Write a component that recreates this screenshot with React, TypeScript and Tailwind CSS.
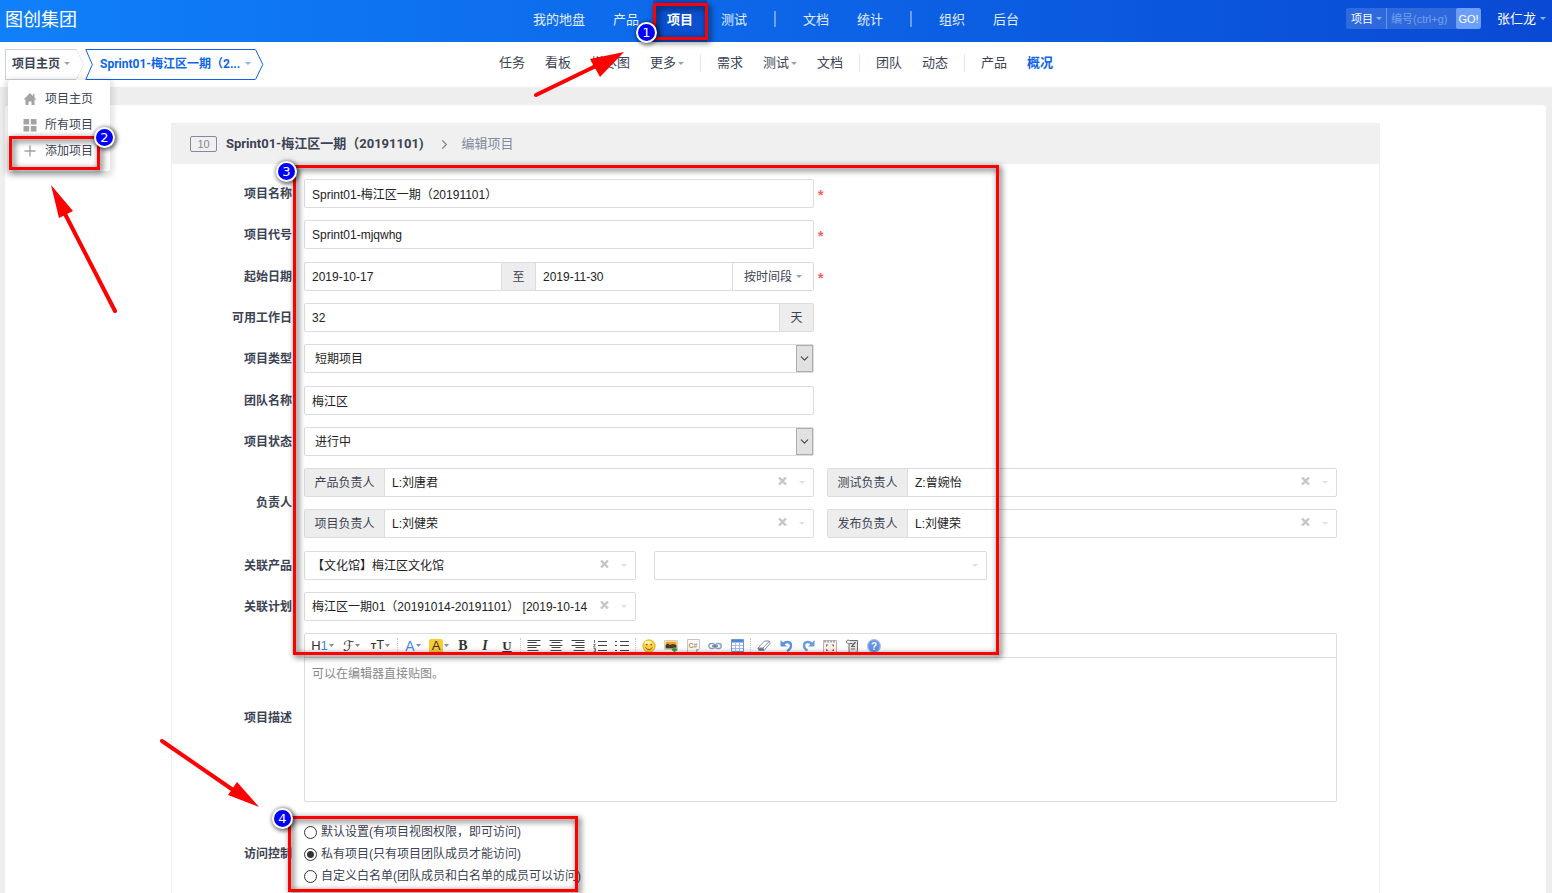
import type { ReactNode } from "react";
import { ChevronDown, ChevronRight } from "lucide-react";

const ownerRows = [
  [
    { id: "po", label: "产品负责人", value: "L:刘唐君" },
    { id: "qd", label: "测试负责人", value: "Z:曾婉怡" },
  ],
  [
    { id: "pm", label: "项目负责人", value: "L:刘健荣" },
    { id: "rd", label: "发布负责人", value: "L:刘健荣" },
  ],
];

const accessOptions = [
  { id: "open", label: "默认设置(有项目视图权限，即可访问)" },
  { id: "private", label: "私有项目(只有项目团队成员才能访问)" },
  { id: "custom", label: "自定义白名单(团队成员和白名单的成员可以访问)" },
];

const inputClass =
  "h-[29px] w-full min-w-0 rounded-[2px] border border-[#dcdcdc] bg-white px-[7px] text-[#222] outline-none";

function Caret({ className = "text-[#a0a0a0]" }: { className?: string }) {
  return (
    <svg width="6" height="3" viewBox="0 0 6 3" className={`shrink-0 ${className}`} aria-hidden="true">
      <path d="M0 0h6L3 3z" fill="currentColor" />
    </svg>
  );
}

/* ---------- top bar ---------- */

function TopLink({ children, active = false }: { children: ReactNode; active?: boolean }) {
  return (
    <a
      href="#"
      className={`flex h-full items-center px-[14px] pb-[3px] ${active ? "bg-[#0a50cf] font-bold text-white" : "text-[#e3eefe]"}`}
    >
      {children}
    </a>
  );
}

function TopSeparator() {
  return <span className="mx-[13px] mb-1 h-4 w-[2px] bg-white/40" />;
}

function TopBar() {
  return (
    <header className="grid h-[42px] grid-cols-[1fr_auto_1fr] items-center bg-linear-to-r from-[#1080fa] via-[#0d65e8] to-[#0a49d3] text-[13px] text-white">
      <h1 className="pb-[3px] pl-[5px] text-[18px] leading-6">图创集团</h1>
      <nav className="flex h-full items-center whitespace-nowrap">
        <TopLink>我的地盘</TopLink>
        <TopLink>产品</TopLink>
        <TopLink active>项目</TopLink>
        <TopLink>测试</TopLink>
        <TopSeparator />
        <TopLink>文档</TopLink>
        <TopLink>统计</TopLink>
        <TopSeparator />
        <TopLink>组织</TopLink>
        <TopLink>后台</TopLink>
      </nav>
      <div className="flex items-center justify-end gap-4 pr-[6px] pb-[5px]">
        <form className="flex h-[21px] overflow-hidden rounded-[2px] bg-white/15 text-[11px]">
          <button type="button" className="flex w-[41px] items-center justify-between border-r border-white/30 pr-1 pl-[5px]">
            项目
            <Caret className="text-[#8db4f5]" />
          </button>
          <input
            aria-label="编号"
            placeholder="编号(ctrl+g)"
            className="w-[69px] bg-transparent pl-1 outline-none placeholder:text-[#75a0ee]"
          />
          <button type="submit" className="w-[25px] rounded-[2px] bg-[#6c9ffa]">
            GO!
          </button>
        </form>
        <button type="button" className="flex items-center gap-1">
          张仁龙
          <Caret className="text-[#8db4f5]" />
        </button>
      </div>
    </header>
  );
}

/* ---------- second bar ---------- */

function SubLink({ children, caret = false, active = false }: { children: ReactNode; caret?: boolean; active?: boolean }) {
  return (
    <a href="#" className={`flex items-center gap-[2px] px-[10px] ${active ? "font-bold text-[#0c64eb]" : ""}`}>
      {children}
      {caret && <Caret />}
    </a>
  );
}

function SubSeparator() {
  return <span className="mx-[6px] h-[18px] w-px bg-[#e8e8e8]" />;
}

function ProjectMenu() {
  return (
    <ul className="absolute top-[31px] left-[3px] z-10 h-[91px] w-[102px] rounded-[3px] bg-white pt-[6px] shadow-[0_2px_5px_4px_rgba(0,0,0,0.1)]">
      <li>
        <a href="#" className="flex h-[26px] items-center gap-2 pl-[15px]">
          <svg width="14" height="14" viewBox="0 0 14 14" fill="#a3a3a3">
            <path d="M7 1 0.5 7.5H2.5V13H5.5V9.5H8.5V13H11.5V7.5H13.5L11.5 5.5V2H10V4z" />
          </svg>
          项目主页
        </a>
      </li>
      <li>
        <a href="#" className="flex h-[26px] items-center gap-2 pl-[15px]">
          <svg width="14" height="14" viewBox="0 0 14 14" fill="#a3a3a3">
            <path d="M0.5 1h5.7v5.5H0.5zM7.8 1h5.7v5.5H7.8zM0.5 8h5.7v5.5H0.5zM7.8 8h5.7v5.5H7.8z" />
          </svg>
          所有项目
        </a>
      </li>
      <li>
        <a href="#" className="flex h-[26px] items-center gap-2 pl-[15px]">
          <svg width="14" height="14" viewBox="0 0 14 14" stroke="#a3a3a3" strokeWidth="1.4">
            <path d="M7 1.5v11M1.5 7h11" />
          </svg>
          添加项目
        </a>
      </li>
    </ul>
  );
}

function SubBar() {
  return (
    <div className="grid h-[45px] grid-cols-[1fr_auto_1fr] items-center bg-white">
      <div className="flex items-center pl-[5px]">
        <div className="relative">
          <button
            type="button"
            className="flex h-[31px] w-[71px] items-center gap-1 border border-r-0 border-[#cbd0db] pb-[2px] pl-[6px] font-bold"
          >
            项目主页
            <Caret />
          </button>
          <ProjectMenu />
        </div>
        <svg width="9" height="31" viewBox="0 0 9 31" fill="none" stroke="#dcdfe6" strokeDasharray="2 1">
          <path d="M0.5 0.5 7.5 15.5 0.5 30.5" />
        </svg>
        <svg width="8" height="31" viewBox="0 0 8 31" fill="none" stroke="#0c64eb">
          <path d="M8 0.5H0.8L7.3 15.5 0.8 30.5H8" />
        </svg>
        <button
          type="button"
          className="flex h-[31px] w-[162px] items-center justify-between border-y border-[#0c64eb] pr-1 pb-[2px] pl-[7px] font-bold text-[#0c64eb]"
        >
          <span className="font-[Roboto,Noto_Sans_CJK_SC,sans-serif]">Sprint01-梅江区一期（2...</span>
          <Caret className="text-[#86b1f5]" />
        </button>
        <svg width="9" height="31" viewBox="0 0 9 31" fill="none" stroke="#0c64eb">
          <path d="M0.5 0.5 7.8 15.5 0.5 30.5" />
        </svg>
      </div>
      <nav className="flex items-center pb-[3px] text-[13px] whitespace-nowrap">
        <SubLink>任务</SubLink>
        <SubLink>看板</SubLink>
        <SubLink>燃尽图</SubLink>
        <SubLink caret>更多</SubLink>
        <SubSeparator />
        <SubLink>需求</SubLink>
        <SubLink caret>测试</SubLink>
        <SubLink>文档</SubLink>
        <SubSeparator />
        <SubLink>团队</SubLink>
        <SubLink>动态</SubLink>
        <SubSeparator />
        <SubLink>产品</SubLink>
        <SubLink active>概况</SubLink>
      </nav>
    </div>
  );
}

/* ---------- form parts ---------- */

function Row({ label, htmlFor, children }: { label: string; htmlFor?: string; children: ReactNode }) {
  return (
    <div className="flex items-center gap-3">
      <label htmlFor={htmlFor} className="w-[120px] shrink-0 text-right font-bold">
        {label}
      </label>
      <div className="min-w-0 flex-1">{children}</div>
    </div>
  );
}

// first column of the two-column form, with room for the required mark
function HalfRow({
  label,
  htmlFor,
  required = false,
  children,
}: {
  label: string;
  htmlFor: string;
  required?: boolean;
  children: ReactNode;
}) {
  return (
    <Row label={label} htmlFor={htmlFor}>
      <div className="grid grid-cols-[1fr_13px_1fr] items-center">
        <div className="flex min-w-0">{children}</div>
        {required && <span className="pt-[2px] pl-1 text-[14px] leading-4 font-bold text-[#ff5d5d]">*</span>}
      </div>
    </Row>
  );
}

function NativeSelect({ id, value }: { id: string; value: string }) {
  return (
    <div className="flex h-[29px] w-full rounded-[2px] border border-[#dcdcdc] bg-white">
      <select id={id} className="min-w-0 flex-1 appearance-none pl-[10px] text-[#222] outline-none">
        <option>{value}</option>
      </select>
      <span className="flex w-[17px] items-center justify-center border border-[#adadad] bg-[#e1e1e1]">
        <ChevronDown size={13} strokeWidth={2} color="#444" className="shrink-0" />
      </span>
    </div>
  );
}

function ChosenSelect({
  id,
  value,
  label,
  ariaLabel,
  clearable = true,
}: {
  id: string;
  value: string;
  label?: string;
  ariaLabel?: string;
  clearable?: boolean;
}) {
  return (
    <div className="flex h-[29px] min-w-0 rounded-[2px] border border-[#dcdcdc] bg-white">
      {label && (
        <label htmlFor={id} className="flex w-20 shrink-0 items-center justify-center border-r border-[#dcdcdc] bg-[#ededed]">
          {label}
        </label>
      )}
      <select id={id} aria-label={ariaLabel} className="min-w-0 flex-1 appearance-none pl-[7px] text-[#222] outline-none">
        <option>{value}</option>
      </select>
      {clearable && (
        <button type="button" aria-label="清除" className="flex w-[23px] items-center justify-center pb-[3px]">
          <svg width="9" height="8" viewBox="0 0 9 8" stroke="#c6c8c8" strokeWidth="2.4">
            <path d="M1 0.5 8 7.5M8 0.5 1 7.5" />
          </svg>
        </button>
      )}
      <span className="flex w-[19px] items-center pl-[5px]">
        <Caret className="text-[#dfdfe6]" />
      </span>
    </div>
  );
}

/* ---------- editor toolbar ---------- */

function Tool({ name, children }: { name: string; children: ReactNode }) {
  return (
    <button type="button" aria-label={name} className="flex h-full w-[22px] items-center justify-center text-[#333]">
      {children}
    </button>
  );
}

function DropTool({ name, wide = false, children }: { name: string; wide?: boolean; children: ReactNode }) {
  return (
    <button
      type="button"
      aria-label={name}
      className={`flex h-full items-center justify-center gap-px ${wide ? "w-[29px]" : "w-[26px]"}`}
    >
      {children}
      <svg width="5" height="3" viewBox="0 0 5 3" fill="#888">
        <path d="M0 0h5L2.5 3z" />
      </svg>
    </button>
  );
}

function ToolSeparator() {
  return (
    <span className="flex h-4 w-[5px] justify-center">
      <span className="border-l border-dotted border-[#ccc]" />
    </span>
  );
}

function Lines({ d }: { d: string }) {
  return (
    <svg width="14" height="12" viewBox="0 0 14 12" stroke="#444" fill="none">
      <path d={d} />
    </svg>
  );
}

function Toolbar() {
  return (
    <div className="flex h-[24px] items-center overflow-hidden border-b border-[#dcdcdc] pl-[3px] text-[13px] text-[#333]">
      <DropTool name="段落" wide>
        <span>
          H<span className="text-[#3f84ea]">1</span>
        </span>
      </DropTool>
      <DropTool name="字体" wide>
        <span className="font-[DejaVu_Sans,sans-serif] text-[14px]">ℱ</span>
      </DropTool>
      <DropTool name="文字大小" wide>
        <span>
          <span className="text-[9px] font-bold">T</span>T
        </span>
      </DropTool>
      <ToolSeparator />
      <DropTool name="文字颜色">
        <span className="text-[14px] text-[#4a86e8]">A</span>
      </DropTool>
      <DropTool name="文字背景">
        <span className="w-[14px] rounded-[2px] bg-[#fccb2f] text-center leading-[14px]">A</span>
      </DropTool>
      <Tool name="粗体">
        <span className="font-[Liberation_Serif,serif] text-[14px] font-bold">B</span>
      </Tool>
      <Tool name="斜体">
        <span className="font-[Liberation_Serif,serif] text-[14px] font-bold italic">I</span>
      </Tool>
      <Tool name="下划线">
        <span className="font-[Liberation_Serif,serif] text-[13px] font-bold underline">U</span>
      </Tool>
      <ToolSeparator />
      <Tool name="左对齐">
        <Lines d="M0.5 0.5h13M0.5 2.5h9M0.5 5.5h13M0.5 7.5h9M0.5 10.5h11" />
      </Tool>
      <Tool name="居中">
        <Lines d="M0.5 0.5h13M2.5 2.5h9M0.5 5.5h13M2.5 7.5h9M1.5 10.5h11" />
      </Tool>
      <Tool name="右对齐">
        <Lines d="M0.5 0.5h13M4.5 2.5h9M0.5 5.5h13M4.5 7.5h9M2.5 10.5h11" />
      </Tool>
      <Tool name="编号">
        <svg width="14" height="12" viewBox="0 0 14 12" stroke="#444" fill="none">
          <path d="M5 1.5h9M5 5.5h9M5 10.5h9" />
          <path d="M1.5 0v3M0.5 4.5h2L0.5 7h2M0.5 8.5h2v3h-2M1 10h1.5" strokeWidth="0.7" />
        </svg>
      </Tool>
      <Tool name="项目符号">
        <Lines d="M5 1.5h9M5 5.5h9M5 10.5h9M0 1.5h2M0 5.5h2M0 10.5h2" />
      </Tool>
      <ToolSeparator />
      <Tool name="插入表情">
        <svg width="14" height="14" viewBox="0 0 14 14" fill="none">
          <circle cx="7" cy="7" r="6.2" fill="#fcd13f" stroke="#e2a21f" strokeWidth="0.8" />
          <ellipse cx="6" cy="3.8" rx="3.5" ry="2" fill="#fff2a8" />
          <circle cx="4.8" cy="5.6" r="0.9" fill="#8a5a10" />
          <circle cx="9.2" cy="5.6" r="0.9" fill="#8a5a10" />
          <path d="M3.5 8.3c1.5 3 5.5 3 7 0" stroke="#9a6410" />
        </svg>
      </Tool>
      <Tool name="图片">
        <svg width="14" height="14" viewBox="0 0 14 14">
          <path d="M0.5 1.5h13v9H0.5z" fill="#fff" stroke="#d4cfc0" />
          <path d="M1.5 2.5h11v4h-11z" fill="#f0a326" />
          <path d="M1.5 6 4 4.5 5.5 6 9 5l3.5 1v3.5h-11z" fill="#4c3a1f" />
          <path d="M10.5 8v5.5M7.8 10.8h5.5" stroke="#3a9a46" strokeWidth="2" />
        </svg>
      </Tool>
      <Tool name="插入程序代码">
        <svg width="13" height="14" viewBox="0 0 13 14">
          <path d="M0.5 0.5h12v9l-3.5 4H0.5z" fill="#fafafa" stroke="#c5c5c5" />
          <path d="M9 13.5V10h3.5z" fill="#b9b9b9" />
          <text x="1.5" y="9" fontSize="7" fontWeight="bold" fill="#c58a60">
            C#
          </text>
        </svg>
      </Tool>
      <Tool name="超级链接">
        <svg width="14" height="8" viewBox="0 0 14 8" fill="none" stroke="#8ba1c2" strokeWidth="1.4">
          <rect x="0.8" y="1.5" width="6" height="5" rx="2.5" />
          <rect x="7.2" y="1.5" width="6" height="5" rx="2.5" />
          <path d="M4 4h6" stroke="#5a7299" />
        </svg>
      </Tool>
      <Tool name="表格">
        <svg width="13" height="13" viewBox="0 0 13 13">
          <path d="M0.5 0.5h12v12h-12z" fill="#fff" stroke="#6c97d9" />
          <path d="M1 1h11v2.500H1z" fill="#4b83d6" />
          <path d="M1 6.5h11M1 9.5h11M4.5 3v9.5M8.5 3v9.5" stroke="#a4c0ea" />
        </svg>
      </Tool>
      <ToolSeparator />
      <Tool name="删除格式">
        <svg width="14" height="13" viewBox="0 0 14 13" fill="#fff" stroke="#8393ad">
          <path d="M1 9 7.5 2H12.5L13 4.500 7 11.500H2z" />
          <path d="M1 9h5l1 2.500h-5z" fill="#6d7482" />
          <path d="M6 9 12.5 2" />
        </svg>
      </Tool>
      <Tool name="后退">
        <svg width="13" height="13" viewBox="0 0 13 13" fill="none" stroke="#5f92dc" strokeWidth="2.4">
          <path d="M3 5.5c2-3.500 8-3.500 8 1 0 2.500-2 4.500-4 5.500" />
          <path d="M0.5 1v6.500H7z" fill="#5f92dc" stroke="none" />
        </svg>
      </Tool>
      <Tool name="前进">
        <svg width="13" height="13" viewBox="0 0 13 13" fill="none" stroke="#6d9de0" strokeWidth="2.4">
          <path d="M10 5.5c-2-3.500-8-3.500-8 1 0 2.500 1.500 4 3.500 5" />
          <path d="M12.5 1v6.500H6z" fill="#6d9de0" stroke="none" />
        </svg>
      </Tool>
      <Tool name="全屏显示">
        <svg width="14" height="14" viewBox="0 0 14 14">
          <path d="M0.5 1.5h13v12H0.5z" fill="#f4f4f4" stroke="#b5b5b5" />
          <path d="M1 2.5h12" stroke="#a9a9a9" strokeWidth="2" strokeDasharray="2 1" />
          <path d="M3 5.5h2.500L3 8zM11 5.5H8.5L11 8zM3 12h2.500L3 9.500zM11 12H8.5L11 9.500z" fill="#d0552b" />
        </svg>
      </Tool>
      <Tool name="HTML代码">
        <svg width="13" height="14" viewBox="0 0 13 14" fill="#e6e6e6" stroke="#686868">
          <path d="M3.5 1.5h8v10c0 1.500-1 2-2 2h-5c-1 0-1.500-1-1.500-2V5" />
          <path d="M3.5 1.5c-2-1-3 0-3 1.500s1.500 1.500 3 1.500h3M5 7.5h4M5 10h4" fill="none" />
          <path d="M9.5 3 6 7" fill="none" strokeWidth="1.5" />
        </svg>
      </Tool>
      <Tool name="帮助">
        <svg width="14" height="14" viewBox="0 0 14 14">
          <circle cx="7" cy="7" r="6.3" fill="#5d93e8" stroke="#9db9e4" strokeWidth="1.2" />
          <text x="7" y="10.5" textAnchor="middle" fontSize="10" fontWeight="bold" fill="#fff">
            ?
          </text>
        </svg>
      </Tool>
    </div>
  );
}

/* ---------- form ---------- */

function ProjectForm() {
  return (
    <form className="flex flex-col gap-[13px] pt-[15px] pr-[42px] pb-6">
      <div className="flex flex-col gap-3">
        <HalfRow label="项目名称" htmlFor="name" required>
          <input id="name" className={inputClass} defaultValue="Sprint01-梅江区一期（20191101）" />
        </HalfRow>
        <HalfRow label="项目代号" htmlFor="code" required>
          <input id="code" className={inputClass} defaultValue="Sprint01-mjqwhg" />
        </HalfRow>
      </div>

      <div className="flex flex-col gap-3">
        <HalfRow label="起始日期" htmlFor="begin" required>
          <input id="begin" className={`${inputClass} flex-1 rounded-r-none`} defaultValue="2019-10-17" />
          <span className="flex w-[33px] shrink-0 items-center justify-center border-y border-[#dcdcdc] bg-[#ededed]">至</span>
          <input aria-label="结束日期" className={`${inputClass} flex-1 rounded-none`} defaultValue="2019-11-30" />
          <button
            type="button"
            className="flex w-[81px] shrink-0 items-center justify-center gap-1 rounded-r-[2px] border border-l-0 border-[#d3dae2]"
          >
            按时间段
            <Caret />
          </button>
        </HalfRow>
        <HalfRow label="可用工作日" htmlFor="days">
          <input id="days" className={`${inputClass} rounded-r-none`} defaultValue="32" />
          <span className="flex w-[34px] shrink-0 items-center justify-center rounded-r-[2px] border border-l-0 border-[#dcdcdc] bg-[#ededed]">
            天
          </span>
        </HalfRow>
        <HalfRow label="项目类型" htmlFor="type">
          <NativeSelect id="type" value="短期项目" />
        </HalfRow>
      </div>

      <div className="flex flex-col gap-3">
        <HalfRow label="团队名称" htmlFor="team">
          <input id="team" className={inputClass} defaultValue="梅江区" />
        </HalfRow>
        <HalfRow label="项目状态" htmlFor="status">
          <NativeSelect id="status" value="进行中" />
        </HalfRow>
        <Row label="负责人" htmlFor="po">
          <div className="flex flex-col gap-3">
            {ownerRows.map((owners) => (
              <div key={owners[0].id} className="grid grid-cols-2 gap-[13px]">
                {owners.map((owner) => (
                  <ChosenSelect key={owner.id} {...owner} />
                ))}
              </div>
            ))}
          </div>
        </Row>
      </div>

      <div className="flex flex-col gap-3">
        <Row label="关联产品" htmlFor="product">
          <div className="grid grid-cols-3 gap-[18px]">
            <ChosenSelect id="product" value="【文化馆】梅江区文化馆" />
            <ChosenSelect id="product-2" value="" ariaLabel="关联产品 2" clearable={false} />
          </div>
        </Row>
        <Row label="关联计划" htmlFor="plan">
          <div className="grid grid-cols-3 gap-[18px]">
            <ChosenSelect id="plan" value="梅江区一期01（20191014-20191101） [2019-10-14" />
          </div>
        </Row>
        <Row label="项目描述" htmlFor="desc">
          <div className="rounded-[2px] border border-[#dcdcdc]">
            <Toolbar />
            <textarea
              id="desc"
              placeholder="可以在编辑器直接贴图。"
              className="block h-[143px] w-full resize-none px-[7px] py-[6px] leading-5 outline-none placeholder:text-[#888]"
            />
          </div>
        </Row>
      </div>

      <div role="radiogroup" aria-labelledby="acl" className="flex items-center gap-3 pt-[6px]">
        <span id="acl" className="w-[120px] text-right font-bold">
          访问控制
        </span>
        <div>
          {accessOptions.map((option) => (
            <label key={option.id} className="flex h-[22px] items-center gap-1">
              <input
                type="radio"
                name="acl"
                defaultChecked={option.id === "private"}
                className="size-[13px] appearance-none rounded-full border border-[#333] bg-white checked:bg-[radial-gradient(circle,#333_3px,transparent_4px)]"
              />
              {option.label}
            </label>
          ))}
        </div>
      </div>
    </form>
  );
}

/* ---------- tutorial marks ---------- */

function Badge({ n, className }: { n: number; className: string }) {
  return (
    <span
      className={`absolute flex size-[21px] items-center justify-center rounded-full border-2 border-white bg-[#0000fe] font-[DejaVu_Sans,sans-serif] text-[13px] leading-none text-white shadow-[1px_1px_4px_1px_rgba(0,0,0,0.6)] ${className}`}
    >
      {n}
    </span>
  );
}

function Marks() {
  const frame = "absolute border-[3px] border-[#fe0000] drop-shadow-[2px_2px_3px_rgba(0,0,0,0.8)]";
  return (
    <div className="pointer-events-none absolute inset-0 z-20 overflow-hidden">
      <div className={`${frame} top-[3px] left-[653px] h-[37px] w-[55px]`} />
      <div className={`${frame} top-[136px] left-[9px] h-[34px] w-[91px]`} />
      <div className={`${frame} top-[165px] left-[293px] h-[490px] w-[706px]`} />
      <div className={`${frame} top-[816px] left-[288px] h-[76px] w-[290px]`} />
      <svg width="640" height="820" viewBox="0 0 640 820" className="absolute top-0 left-0" fill="#fe0000" stroke="#fe0000">
        <path d="M536 95 600 64M115 311 64 212M162 741 236 792" strokeWidth="4" strokeLinecap="round" />
        <path d="M624 52 590 59 600 77zM51 185 73 211 59 218zM259 807 237 782 228 795z" stroke="none" />
      </svg>
      <Badge n={1} className="top-[22px] left-[636px]" />
      <Badge n={2} className="top-[127px] left-[94px]" />
      <Badge n={3} className="top-[161px] left-[276px]" />
      <Badge n={4} className="top-[808px] left-[272px]" />
    </div>
  );
}

export default function App() {
  return (
    <div className="relative flex min-h-screen flex-col bg-[#eee] font-[Liberation_Sans,Noto_Sans_CJK_SC,sans-serif] text-[12px] leading-4 text-[#3c4353]">
      <TopBar />
      <SubBar />
      <main className="flex flex-1 flex-col pt-[18px] pr-[6px] pl-[5px]">
        <div className="flex flex-1 flex-col rounded-t-[4px] bg-white pt-[18px]">
          <section className="mx-auto w-full max-w-[1209px] flex-1 border border-b-0 border-[#eee]">
            <div className="flex h-10 items-center bg-[#f0f0f0] pl-[18px] text-[13px]">
              <span className="h-4 w-[27px] rounded-[2px] border border-[#838a9d] text-center text-[11px] leading-[14px] text-[#838a9d]">
                10
              </span>
              <h2 className="ml-[9px] font-[Roboto,Noto_Sans_CJK_SC,sans-serif] font-bold">Sprint01-梅江区一期（20191101)</h2>
              <ChevronRight size={15} color="#838a9d" className="mr-[9px] ml-[14px]" />
              <span className="text-[#838a9d]">编辑项目</span>
            </div>
            <ProjectForm />
          </section>
        </div>
      </main>
      <Marks />
    </div>
  );
}
